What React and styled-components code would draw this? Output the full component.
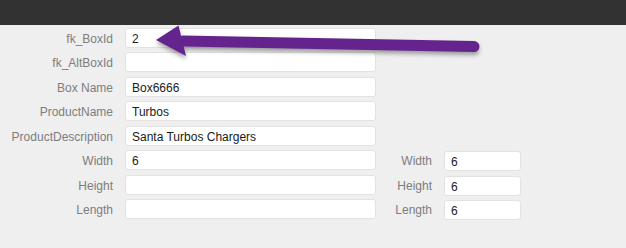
import React from "react";
import styled, { createGlobalStyle } from "styled-components";

const Global = createGlobalStyle`
  html, body { margin: 0; padding: 0; background: #efefef; }
  body { font-family: "Liberation Sans", Arial, sans-serif; }
`;

const Page = styled.div`
  position: relative;
  width: 626px;
  height: 248px;
  background: #efefef;
  overflow: hidden;
`;

const TopBar = styled.div`
  height: 25px;
  background: #323232;
`;

const Form = styled.div`
  display: grid;
  grid-template-columns: 113px 251px 44px 77px;
  grid-auto-rows: 20px;
  column-gap: 12px;
  row-gap: 4.45px;
  padding-top: 3px;
`;

const Label = styled.label`
  grid-column: ${(p) => p.col};
  grid-row: ${(p) => p.row};
  display: flex;
  align-items: center;
  justify-content: flex-end;
  padding-top: 2px;
  font-size: 12px;
  color: #7d7d7d;
  white-space: nowrap;
`;

const Input = styled.input`
  grid-column: ${(p) => p.col};
  grid-row: ${(p) => p.row};
  box-sizing: border-box;
  width: 100%;
  height: 20px;
  margin: ${(p) => (p.$shift ? "1px 0 -1px" : "0")};
  border: 1px solid #e2e2e2;
  border-radius: 3px;
  background: #fff;
  padding: 2px 6px 0;
  font-family: "Liberation Sans", Arial, sans-serif;
  font-size: 12px;
  color: #1a1a1a;
  outline: none;
`;

const Overlay = styled.svg`
  position: absolute;
  left: 0;
  top: 0;
  width: 626px;
  height: 248px;
  pointer-events: none;
  filter: drop-shadow(0 3px 2px rgba(0, 0, 0, 0.35));
`;

const leftRows = [
  ["fk_BoxId", "2"],
  ["fk_AltBoxId", ""],
  ["Box Name", "Box6666"],
  ["ProductName", "Turbos"],
  ["ProductDescription", "Santa Turbos Chargers"],
  ["Width", "6"],
  ["Height", ""],
  ["Length", ""],
];

const rightRows = [
  ["Width", "6", 6],
  ["Height", "6", 7],
  ["Length", "6", 8],
];

export default function App() {
  return (
    <Page>
      <Global />
      <TopBar />
      <Form>
        {leftRows.map(([label, value], i) => (
          <React.Fragment key={label + i}>
            <Label col={1} row={i + 1}>{label}</Label>
            <Input col={2} row={i + 1} defaultValue={value} readOnly />
          </React.Fragment>
        ))}
        {rightRows.map(([label, value, row]) => (
          <React.Fragment key={"r" + label}>
            <Label col={3} row={row}>{label}</Label>
            <Input col={4} row={row} defaultValue={value} readOnly $shift />
          </React.Fragment>
        ))}
      </Form>
      <Overlay viewBox="0 0 626 248">
        <line
          x1="183"
          y1="41"
          x2="474"
          y2="46.5"
          stroke="#65238e"
          strokeWidth="11"
          strokeLinecap="round"
        />
        <polygon points="156,40 178.5,25.5 186,56" fill="#65238e" />
      </Overlay>
    </Page>
  );
}
